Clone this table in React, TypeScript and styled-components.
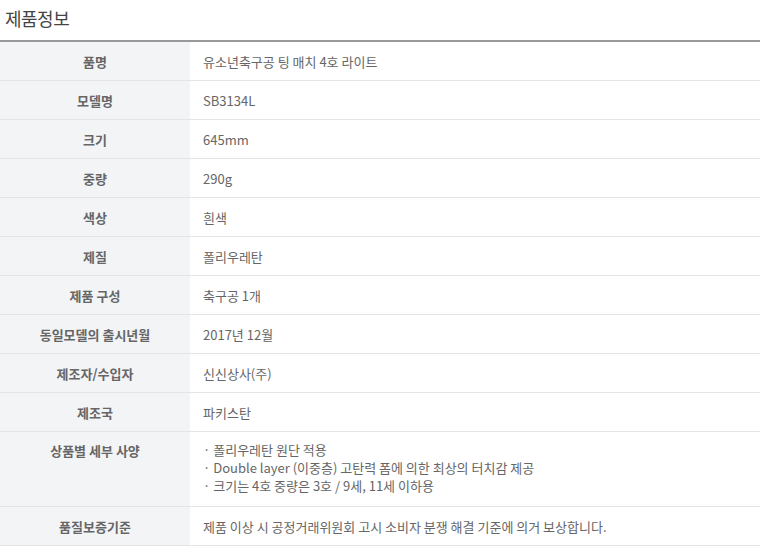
import { Fragment } from 'react';
import styled, { createGlobalStyle } from 'styled-components';

const GlobalStyle = createGlobalStyle`
  body {
    margin: 0;
    background: #fff;
    font-family: "Noto Sans CJK KR", "Noto Sans", sans-serif;
  }
`;

const Wrap = styled.div`
  width: 760px;
`;

const Title = styled.h3`
  margin: 0;
  height: 40px;
  padding-left: 5px;
  font-size: 18px;
  font-weight: 400;
  line-height: 36px;
  color: #444;
  letter-spacing: -0.5px;
`;

const Table = styled.div`
  border-top: 2px solid #999;
  display: grid;
  grid-template-columns: 190px 1fr;
`;

const Label = styled.div<{ tall?: boolean }>`
  background: #f3f4f6;
  border-bottom: 1px solid #e4e4e4;
  height: ${(p) => (p.tall ? 75 : 39)}px;
  display: flex;
  justify-content: center;
  align-items: ${(p) => (p.tall ? 'flex-start' : 'center')};
  padding-top: ${(p) => (p.tall ? 9 : 0)}px;
  box-sizing: border-box;
  font-size: 13px;
  font-weight: 700;
  color: #666;
`;

const Value = styled.div<{ tall?: boolean }>`
  border-bottom: 1px solid #e4e4e4;
  height: ${(p) => (p.tall ? 75 : 39)}px;
  display: flex;
  flex-direction: column;
  justify-content: ${(p) => (p.tall ? 'flex-start' : 'center')};
  padding: ${(p) => (p.tall ? '9px 0 0 13px' : '0 0 0 13px')};
  box-sizing: border-box;
  font-size: 13px;
  color: #666;
`;

const Line = styled.div`
  line-height: 18px;
`;

const rows: [string, string][] = [
  ['품명', '유소년축구공 팅 매치 4호 라이트'],
  ['모델명', 'SB3134L'],
  ['크기', '645mm'],
  ['중량', '290g'],
  ['색상', '흰색'],
  ['제질', '폴리우레탄'],
  ['제품 구성', '축구공 1개'],
  ['동일모델의 출시년월', '2017년 12월'],
  ['제조자/수입자', '신신상사(주)'],
  ['제조국', '파키스탄'],
];

const details = [
  '· 폴리우레탄 원단 적용',
  '· Double layer (이중층) 고탄력 폼에 의한 최상의 터치감 제공',
  '· 크기는 4호 중량은 3호 / 9세, 11세 이하용',
];

export default function App() {
  return (
    <>
      <GlobalStyle />
      <Wrap>
        <Title>제품정보</Title>
        <Table>
          {rows.map(([k, v]) => (
            <Fragment key={k}>
              <Label>{k}</Label>
              <Value>{v}</Value>
            </Fragment>
          ))}
          <Label tall>상품별 세부 사양</Label>
          <Value tall>
            {details.map((d) => (
              <Line key={d}>{d}</Line>
            ))}
          </Value>
          <Label>품질보증기준</Label>
          <Value>제품 이상 시 공정거래위원회 고시 소비자 분쟁 해결 기준에 의거 보상합니다.</Value>
        </Table>
      </Wrap>
    </>
  );
}
